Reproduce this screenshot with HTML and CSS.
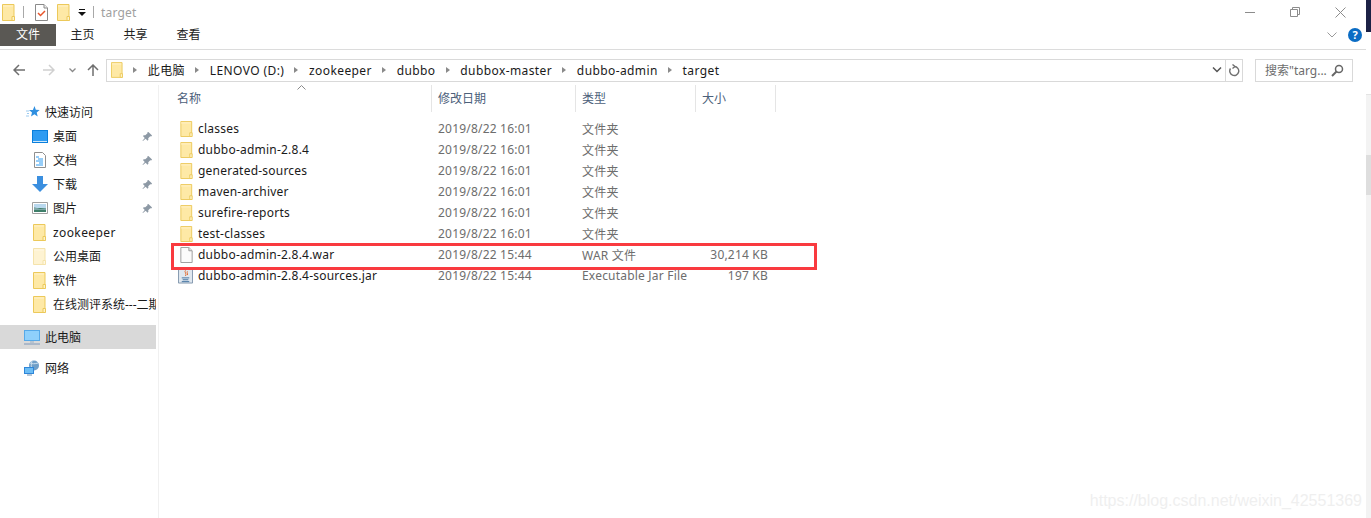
FILE: index.html
```html
<!DOCTYPE html>
<html lang="zh-CN">
<head>
    <meta charset="UTF-8">
    <title>target</title>
    <link rel="stylesheet" href="styles.css">
</head>
<body>
    <svg class="defs" width="0" height="0">
        <symbol id="folder" viewBox="0 0 13 17">
            <path d="M.5.500h11.500v16H.5z" fill="#fee9a6" stroke="#ecc95a"/>
            <path d="M1 1h10v2H1z" fill="#ffedb8"/>
            <path d="M10 16.500v-4h2.500v4z" fill="#fff3c9" stroke="#ecc95a"/>
        </symbol>
        <symbol id="pin" viewBox="0 0 12 12">
            <path d="M7 1l4 4-1 1-1-.3-2.200 2.200.2 1.600-1 1-2-2L1 11l-.5-.5L3 7.500l-2-2 1-1 1.600.2L6 2.500 5.700 1.500z" fill="#8d99a5"/>
        </symbol>
    </svg>

    <div class="page">
        <div class="explorer">
            <header class="titlebar">
                <svg class="folder-icon"><use href="#folder"/></svg>
                <span class="qa-sep"></span>
                <svg class="qa-note" width="13" height="17" viewBox="0 0 13 17">
                    <path d="M.5.500h8.500l3.500 3.500v12.500H.5z" fill="#fff" stroke="#8a8a8a"/>
                    <path d="M9 .5v3.500h3.500" fill="#eee" stroke="#8a8a8a"/>
                    <path d="M3 9l2.500 2.500L10 7" fill="none" stroke="#e8552b" stroke-width="1.500"/>
                </svg>
                <svg class="folder-icon qa-folder"><use href="#folder"/></svg>
                <svg class="qa-drop" width="8" height="7" viewBox="0 0 8 7">
                    <path d="M1 0h6v1H1zM0 3h8L4 7z" fill="#111"/>
                </svg>
                <span class="qa-sep qa-sep-right"></span>
                <span class="title-text">target</span>
                <div class="win-buttons">
                    <svg width="10" height="10" viewBox="0 0 10 10"><path d="M0 5.500h10" stroke="#8c8c8c"/></svg>
                    <svg width="10" height="10" viewBox="0 0 10 10"><path d="M.5 2.500h7v7h-7zM2.500 2.500v-2h7v7h-2" fill="none" stroke="#8c8c8c"/></svg>
                    <svg width="11" height="11" viewBox="0 0 11 11"><path d="M.5.500l10 10M10.500.500l-10 10" stroke="#8c8c8c"/></svg>
                </div>
            </header>

            <nav class="ribbon">
                <a class="tab tab-file">文件</a>
                <a class="tab">主页</a>
                <a class="tab">共享</a>
                <a class="tab">查看</a>
                <svg class="ribbon-chevron" width="10" height="6" viewBox="0 0 10 6"><path d="M.5.500L5 5 9.500.500" fill="none" stroke="#9a9a9a"/></svg>
                <span class="help">?</span>
            </nav>

            <div class="addressbar">
                <div class="nav-buttons">
                    <svg width="12" height="12" viewBox="0 0 12 12"><path d="M6 1L1 6l5 5M1 6h11" fill="none" stroke="#6f6f6f" stroke-width="1.500"/></svg>
                    <svg class="nav-forward" width="12" height="12" viewBox="0 0 12 12"><path d="M6 1l5 5-5 5M11 6H0" fill="none" stroke="#d0d0d0" stroke-width="1.500"/></svg>
                    <svg class="nav-down" width="7" height="5" viewBox="0 0 7 5"><path d="M.5.500L3.500 3.500 6.500.500" fill="none" stroke="#8a8a8a" stroke-width="1.300"/></svg>
                    <svg class="nav-up" width="12" height="12" viewBox="0 0 12 12"><path d="M1 6l5-5 5 5M6 1v11" fill="none" stroke="#6f6f6f" stroke-width="1.500"/></svg>
                </div>
                <div class="path-box">
                    <svg class="path-folder"><use href="#folder"/></svg>
                    <span class="crumb-arrow"></span><span class="crumb">此电脑</span>
                    <span class="crumb-arrow"></span><span class="crumb">LENOVO (D:)</span>
                    <span class="crumb-arrow"></span><span class="crumb">zookeeper</span>
                    <span class="crumb-arrow"></span><span class="crumb">dubbo</span>
                    <span class="crumb-arrow"></span><span class="crumb">dubbox-master</span>
                    <span class="crumb-arrow"></span><span class="crumb">dubbo-admin</span>
                    <span class="crumb-arrow"></span><span class="crumb">target</span>
                    <svg class="path-drop" width="10" height="6" viewBox="0 0 10 6"><path d="M1 .5l4 4 4-4" fill="none" stroke="#555" stroke-width="1.500"/></svg>
                    <span class="refresh">
                        <svg width="12" height="13" viewBox="0 0 12 13"><path d="M6.500 2.500A4.500 4.500 0 1 1 2.500 4.500M4.500 .5l2.500 2-2.500 2" fill="none" stroke="#6f6f6f" stroke-width="1.400"/></svg>
                    </span>
                </div>
                <div class="search-box">
                    <span>搜索"targ...</span>
                    <svg width="13" height="13" viewBox="0 0 13 13"><circle cx="8" cy="5" r="3.500" fill="none" stroke="#666" stroke-width="1.500"/><path d="M5.500 7.500L1 12" stroke="#666" stroke-width="2"/></svg>
                </div>
            </div>

            <div class="content">
                <aside class="sidebar">
                    <div class="nav-item nav-top">
                        <svg class="nav-star" width="14" height="14" viewBox="0 0 14 14"><path d="M8.500 1l1.300 3.800 3.900.2-3 2.500 1 3.900-3.300-2.200L5 11.500l1-3.900-3-2.500 3.900-.2z" fill="#2f8fe0"/><path d="M0 6h3M1 8.500h2M0 11h3" stroke="#9ccbf0"/></svg>
                        <span>快速访问</span>
                    </div>
                    <div class="nav-item nav-sub">
                        <svg class="nav-icon" width="16" height="13" viewBox="0 0 16 13"><path d="M0 0h16v13H0z" fill="#0a7fdc"/><path d="M1 1h14v10H1z" fill="#2f9cf2"/><path d="M1 11h14v1H1z" fill="#cfe8fb"/></svg>
                        <span class="nav-label">桌面</span>
                        <svg class="nav-pin"><use href="#pin"/></svg>
                    </div>
                    <div class="nav-item nav-sub">
                        <svg class="nav-icon" width="16" height="16" viewBox="0 0 16 16"><path d="M2.500.500h8l3 3v12h-11z" fill="#fff" stroke="#8f8f8f"/><path d="M4 5h3M6 7h5M4 9h7M7 11h4M4 13h7" stroke="#2f9cf2"/></svg>
                        <span class="nav-label">文档</span>
                        <svg class="nav-pin"><use href="#pin"/></svg>
                    </div>
                    <div class="nav-item nav-sub">
                        <svg class="nav-icon" width="16" height="16" viewBox="0 0 16 16"><path d="M5 0h6v8h5l-8 8-8-8h5z" fill="#3b8fdf"/></svg>
                        <span class="nav-label">下载</span>
                        <svg class="nav-pin"><use href="#pin"/></svg>
                    </div>
                    <div class="nav-item nav-sub">
                        <svg class="nav-icon" width="16" height="12" viewBox="0 0 16 12"><path d="M.5.500h15v11H.5z" fill="#fff" stroke="#a0a0a0"/><path d="M2 2h12v4H2z" fill="#b9d8ee"/><path d="M2 6h12v4H2z" fill="#3f7f6a"/><path d="M2 5l6 2 6-1v2H2z" fill="#7ea7a8"/></svg>
                        <span class="nav-label">图片</span>
                        <svg class="nav-pin"><use href="#pin"/></svg>
                    </div>
                    <div class="nav-item nav-sub">
                        <svg class="nav-folder"><use href="#folder"/></svg>
                        <span class="nav-label nav-latin">zookeeper</span>
                    </div>
                    <div class="nav-item nav-sub">
                        <svg class="nav-folder nav-folder-faded"><use href="#folder"/></svg>
                        <span class="nav-label">公用桌面</span>
                    </div>
                    <div class="nav-item nav-sub">
                        <svg class="nav-folder"><use href="#folder"/></svg>
                        <span class="nav-label">软件</span>
                    </div>
                    <div class="nav-item nav-sub">
                        <svg class="nav-folder"><use href="#folder"/></svg>
                        <span class="nav-label nav-clip">在线测评系统---二期</span>
                    </div>
                    <div class="nav-item nav-top nav-selected">
                        <svg width="16" height="15" viewBox="0 0 16 15"><path d="M0 0h16v11H0z" fill="#56a9e8"/><path d="M1 1h14v9H1z" fill="#8fd0fb"/><path d="M6 11h4v2H6z" fill="#b7c4d0"/><path d="M0 14h16" stroke="#7f97b8"/></svg>
                        <span>此电脑</span>
                    </div>
                    <div class="nav-item nav-top nav-network">
                        <svg width="16" height="16" viewBox="0 0 16 16"><circle cx="10" cy="5.500" r="5" fill="#6f9fc8"/><path d="M6 3c2 1 5 1 8 0M8 1c-1 3-1 6 0 9" fill="none" stroke="#cfe2f0"/><path d="M0 7h10v7H0z" fill="#2f86d8"/><path d="M1 8h8v5H1z" fill="#6cbdf5"/><path d="M3 15h5" stroke="#6f8fb0"/></svg>
                        <span>网络</span>
                    </div>
                </aside>

                <main class="files">
                    <div class="file-head">
                        <svg class="sort-arrow" width="9" height="5" viewBox="0 0 9 5"><path d="M.5 4.500l4-4 4 4" fill="none" stroke="#8a8a8a"/></svg>
                        <div class="head-cell cell-name">名称</div>
                        <div class="head-cell cell-date">修改日期</div>
                        <div class="head-cell cell-type">类型</div>
                        <div class="head-cell cell-size">大小</div>
                    </div>
                    <div class="file-rows">
                        <div class="file-row"><span class="cell-file"><svg class="file-icon"><use href="#folder"/></svg>classes</span><span class="cell-meta">2019/8/22 16:01</span><span class="cell-meta">文件夹</span><span class="cell-meta cell-num"></span></div>
                        <div class="file-row"><span class="cell-file"><svg class="file-icon"><use href="#folder"/></svg>dubbo-admin-2.8.4</span><span class="cell-meta">2019/8/22 16:01</span><span class="cell-meta">文件夹</span><span class="cell-meta cell-num"></span></div>
                        <div class="file-row"><span class="cell-file"><svg class="file-icon"><use href="#folder"/></svg>generated-sources</span><span class="cell-meta">2019/8/22 16:01</span><span class="cell-meta">文件夹</span><span class="cell-meta cell-num"></span></div>
                        <div class="file-row"><span class="cell-file"><svg class="file-icon"><use href="#folder"/></svg>maven-archiver</span><span class="cell-meta">2019/8/22 16:01</span><span class="cell-meta">文件夹</span><span class="cell-meta cell-num"></span></div>
                        <div class="file-row"><span class="cell-file"><svg class="file-icon"><use href="#folder"/></svg>surefire-reports</span><span class="cell-meta">2019/8/22 16:01</span><span class="cell-meta">文件夹</span><span class="cell-meta cell-num"></span></div>
                        <div class="file-row"><span class="cell-file"><svg class="file-icon"><use href="#folder"/></svg>test-classes</span><span class="cell-meta">2019/8/22 16:01</span><span class="cell-meta">文件夹</span><span class="cell-meta cell-num"></span></div>
                        <div class="file-row">
                            <span class="cell-file">
                                <svg class="file-icon" viewBox="0 0 13 17"><path d="M.5.500h8.500l3.500 3.500v12.500H.5z" fill="#fbfbfb" stroke="#9a9a9a"/><path d="M9 .5v3.500h3.500" fill="#e4e4e4" stroke="#9a9a9a"/></svg>
                                dubbo-admin-2.8.4.war
                            </span>
                            <span class="cell-meta">2019/8/22 15:44</span><span class="cell-meta">WAR 文件</span><span class="cell-meta cell-num">30,214 KB</span>
                        </div>
                        <div class="file-row">
                            <span class="cell-file">
                                <svg class="file-icon jar-icon" viewBox="0 0 16 16"><path d="M.5.500h15v15H.5z" fill="#dfe7ef" stroke="#7f94ab"/><path d="M4 10h8M5 12h6M4 14h8" stroke="#3f6f9f"/><path d="M8 2c-2 2 2 3 0 6M10 3c-1 2 1 2 0 4" fill="none" stroke="#e2662a"/></svg>
                                dubbo-admin-2.8.4-sources.jar
                            </span>
                            <span class="cell-meta">2019/8/22 15:44</span><span class="cell-meta">Executable Jar File</span><span class="cell-meta cell-num">197 KB</span>
                        </div>
                    </div>
                    <div class="highlight"></div>
                </main>
            </div>
        </div>
        <div class="edge-strip">
            <div class="edge-navy"></div>
            <div class="edge-white"></div>
            <div class="edge-light"></div>
            <div class="edge-dark"></div>
            <div class="edge-rest"></div>
        </div>
    </div>
    <div class="watermark">https://blog.csdn.net/weixin_42551369</div>
</body>
</html>
```

FILE: styles.css
```css
* {
    box-sizing: border-box;
}

body {
    margin: 0;
    background-color: #fff;
    font-family: "Noto Sans", "Noto Sans CJK SC", sans-serif;
    font-size: 12px;
    color: #1a1a1a;
    overflow: hidden;
}

svg {
    display: block;
    flex: none;
}

.defs {
    position: absolute;
}

.page {
    display: flex;
    height: 518px;
}

.explorer {
    flex: 1;
    min-width: 0;
}

/* title bar */
.titlebar {
    display: flex;
    align-items: center;
    height: 24px;
    padding-left: 2px;
}

.folder-icon {
    width: 13px;
    height: 17px;
}

.qa-sep {
    width: 1px;
    height: 12px;
    margin-left: 8px;
    background-color: #a8a8a8;
}

.qa-note {
    margin-left: 11px;
}

.qa-folder {
    margin-left: 9px;
}

.qa-drop {
    margin-left: 8px;
}

.qa-sep-right {
    margin-left: 7px;
}

.title-text {
    margin-left: 7px;
    letter-spacing: 0.2px;
    color: #a0a0a0;
}

.win-buttons {
    display: flex;
    align-items: center;
    gap: 35px;
    margin-left: auto;
    margin-right: 20px;
}

/* ribbon tabs */
.ribbon {
    display: flex;
    align-items: center;
    height: 26px;
    border-bottom: 1px solid #dcdcdc;
}

.tab {
    width: 53px;
    height: 22px;
    margin-bottom: 3px;
    line-height: 22px;
    text-align: center;
    color: #222;
}

.tab-file {
    width: 56px;
    background-color: #5a5854;
    color: #fff;
}

.ribbon-chevron {
    margin-left: auto;
    margin-right: 11px;
    margin-bottom: 3px;
}

.help {
    width: 14px;
    height: 14px;
    margin-right: 4px;
    margin-bottom: 3px;
    border-radius: 50%;
    background-color: #0a6cc4;
    color: #fff;
    font-size: 11px;
    font-weight: 700;
    line-height: 14px;
    text-align: center;
}

/* address row */
.addressbar {
    display: flex;
    align-items: center;
    height: 35px;
    padding-top: 5px;
}

.nav-buttons {
    display: flex;
    align-items: center;
    width: 106px;
    padding-left: 13px;
}

.nav-forward {
    margin-left: 18px;
}

.nav-down {
    margin-left: 14px;
}

.nav-up {
    margin-left: 11px;
}

.path-box {
    display: flex;
    align-items: center;
    width: 1137px;
    height: 23px;
    padding-left: 4px;
    border: 1px solid #d9d9d9;
    color: #1a1a1a;
}

.path-folder {
    width: 12px;
    height: 16px;
}

.crumb {
    letter-spacing: 0.4px;
}

.crumb-arrow {
    width: 0;
    height: 0;
    margin: 0 10.8px 0 10px;
    border-left: 4px solid #8a8a8a;
    border-top: 3px solid transparent;
    border-bottom: 3px solid transparent;
}

.path-drop {
    margin-left: auto;
    margin-right: 3px;
}

.refresh {
    display: flex;
    align-items: center;
    justify-content: center;
    width: 17px;
    height: 21px;
    border-left: 1px solid #d9d9d9;
}

.search-box {
    display: flex;
    align-items: center;
    justify-content: space-between;
    width: 98px;
    height: 23px;
    margin-left: 12px;
    padding: 0 8px 0 9px;
    border: 1px solid #d9d9d9;
    color: #6d6d6d;
}

/* main area */
.content {
    display: flex;
}

.sidebar {
    width: 159px;
    height: 433px;
    padding-top: 15px;
    border-right: 1px solid #f0f0f0;
}

.nav-item {
    display: flex;
    align-items: center;
    width: 156px;
    height: 24px;
    overflow: hidden;
    white-space: nowrap;
}

.nav-top {
    padding-left: 24px;
}

.nav-top span {
    margin-left: 5px;
}

.nav-star {
    margin-left: 2px;
}

.nav-sub {
    position: relative;
    padding-left: 32px;
}

.nav-icon {
    width: 16px;
}

.nav-label {
    position: absolute;
    left: 53px;
}

.nav-latin {
    letter-spacing: 0.4px;
}

.nav-clip {
    width: 103px;
    overflow: hidden;
}

.nav-pin {
    width: 11px;
    height: 11px;
    margin-left: auto;
    margin-right: 3px;
}

.nav-folder {
    width: 13px;
    height: 17px;
    margin-left: 1px;
}

.nav-folder-faded {
    opacity: 0.5;
}

.nav-selected {
    margin-top: 9px;
    background-color: #d9d9d9;
}

.nav-network {
    margin-top: 7px;
}

/* file list */
.files {
    position: relative;
    flex: 1;
}

.file-head {
    position: relative;
    display: grid;
    grid-template-columns: 273px 144px 120px 80px;
    height: 27px;
}

.sort-arrow {
    position: absolute;
    left: 138px;
    top: 0;
}

.head-cell {
    padding-left: 6px;
    border-right: 1px solid #e5e5e5;
    line-height: 27px;
    color: #4c607a;
}

.cell-name {
    padding-left: 18px;
}

.file-rows {
    padding-top: 6px;
}

.file-row {
    display: grid;
    grid-template-columns: 272px 144px 113px 80px;
    align-items: center;
    height: 21px;
}

.cell-file {
    display: flex;
    align-items: center;
    padding-left: 21px;
    white-space: nowrap;
    letter-spacing: 0.22px;
    color: #1a1a1a;
}

.file-icon {
    width: 13px;
    height: 16px;
    margin-right: 5px;
}

.jar-icon {
    width: 15px;
    margin-left: -2px;
    margin-right: 5px;
}

.cell-meta {
    padding-left: 7px;
    white-space: nowrap;
    letter-spacing: 0.2px;
    color: #6d6d6d;
}

.cell-num {
    padding-left: 0;
    text-align: right;
}

.highlight {
    position: absolute;
    left: 12px;
    top: 158px;
    width: 646px;
    height: 27px;
    border: 3px solid #f93a3f;
}

/* what is left of the window behind */
.edge-strip {
    display: flex;
    flex-direction: column;
    width: 5px;
}

.edge-navy {
    height: 32px;
    background-color: #1c2145;
}

.edge-white {
    height: 63px;
    background-color: #fff;
    border-bottom: 1px solid #e4e4e4;
}

.edge-light {
    height: 60px;
    background-color: #f3f3f3;
}

.edge-dark {
    height: 40px;
    background-color: #dedede;
}

.edge-rest {
    flex: 1;
    background-color: #f3f3f3;
}

.watermark {
    position: absolute;
    right: 9px;
    bottom: 8px;
    font-family: "Liberation Sans", sans-serif;
    font-size: 16px;
    color: #efefef;
}
```
